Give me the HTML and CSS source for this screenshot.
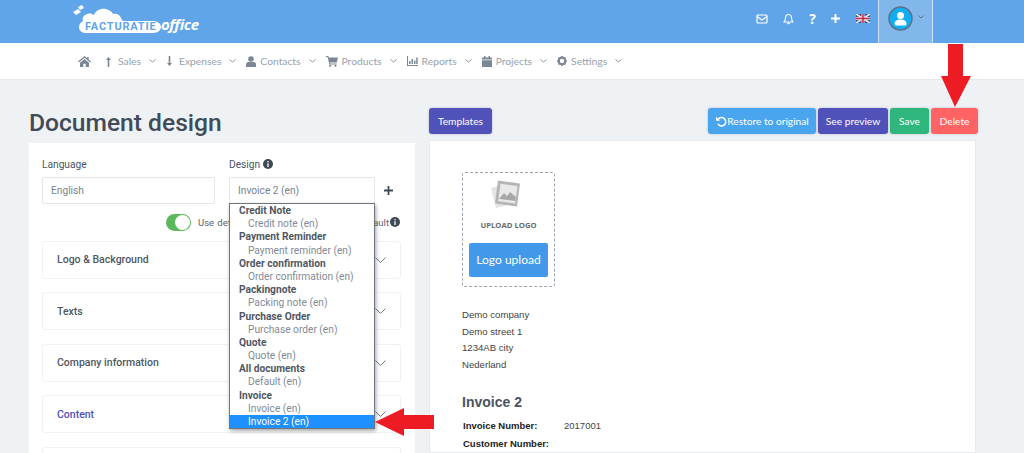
FILE: index.html
```html
<!DOCTYPE html>
<html>
<head>
    <meta http-equiv="Content-Type" content="text/html; charset=utf-8" />
    <title>Document design</title>
    <link rel="stylesheet" href="styles.css">
</head>
<body>

<!--top bar-->
<div class="topbar">
    <svg class="logo" width="132" height="34" viewBox="0 0 132 34">
        <path fill="#fff" d="M2 8l5-3 3 3-5 3zM7 3l4-2 2 3-4 2z"/>
        <path fill="#fff" d="M16 29c-5 0-8-2-8-6 0-3 2-5 4-6-1-4 1-6 4-7 3-1 5 0 7 1 2-5 7-7 12-6 4 1 6 3 7 5 4-1 7 1 8 4 1 2 1 3 3 3h29c5 0 8 3 8 6s-3 6-8 6z"/>
        <text class="logo-name" x="14" y="26" textLength="71">FACTURATIE</text>
        <text class="logo-office" x="90" y="26" textLength="38">office</text>
    </svg>
    <div class="topbar-right">
        <div class="top-icons">
            <svg class="top-icon" width="12" height="10" viewBox="0 0 12 10"><rect x="1" y="1" width="10" height="8" rx="1" fill="none" stroke="#fff" stroke-width="1.2"/><path d="M1 2.5l5 3.5 5-3.5" fill="none" stroke="#fff" stroke-width="1.2"/></svg>
            <svg class="top-icon" width="11" height="12" viewBox="0 0 11 12"><path d="M5.5 1.5c-2 0-3 1.500-3 3.500 0 2.500-1 3-1.500 4h9c-.5-1-1.500-1.500-1.500-4 0-2-1-3.500-3-3.500z" fill="none" stroke="#fff" stroke-width="1.100"/><path d="M4.300 10.500h2.400" stroke="#fff" stroke-width="1.300"/></svg>
            <span class="top-help">?</span>
            <svg class="top-icon" width="11" height="11" viewBox="0 0 11 11"><path d="M5.500 1v9M1 5.500h9" stroke="#fff" stroke-width="2"/></svg>
            <svg class="top-flag" width="14" height="9" viewBox="0 0 14 9"><rect width="14" height="9" fill="#3a4a8c"/><path d="M0 0l14 9M14 0L0 9" stroke="#e8e8f0" stroke-width="1.800"/><path d="M7 0v9M0 4.500h14" stroke="#e8e8f0" stroke-width="3"/><path d="M7 0v9M0 4.500h14" stroke="#c8283c" stroke-width="1.500"/></svg>
        </div>
        <div class="user-tile">
            <svg width="25" height="25" viewBox="0 0 25 25"><circle cx="12.500" cy="12.500" r="11.500" fill="#10aef0" stroke="#5f6f85" stroke-width="1.500"/><circle cx="12.500" cy="9.500" r="3.500" fill="#fff"/><path d="M6.500 18c0-3 2-4.500 6-4.500s6 1.500 6 4.500c0 1-1 1.500-2 1.500h-8c-1 0-2-.5-2-1.500z" fill="#fff"/></svg>
            <svg class="user-caret" width="6" height="4" viewBox="0 0 6 4"><path d="M.5.500L3 3 5.500.5" fill="none" stroke="#5f6f85" stroke-width="1"/></svg>
        </div>
    </div>
</div>

<!--menu-->
<div class="menu">
    <svg class="menu-home" width="13" height="11" viewBox="0 0 13 11"><path fill="#7b8794" d="M6.500 0L0 5.500l.8.900L6.500 1.700l5.700 4.700.8-.9-2.300-1.900V1h-1.500v1.300zM2 6.800V11h3.300V7.800h2.400V11H11V6.800L6.500 3z"/></svg>

    <div class="menu-item"><svg class="menu-icon" width="7" height="11" viewBox="0 0 7 11"><path fill="#7b8794" d="M3.500 1L6 4H4.300v7H2.700V4H1z"/></svg><span>Sales</span><svg class="chev" width="7" height="4" viewBox="0 0 7 4"><path d="M.5.500l3 2.500 3-2.500" fill="none" stroke="#8a95a3"/></svg></div>
    <div class="menu-item"><svg class="menu-icon" width="7" height="11" viewBox="0 0 7 11"><path fill="#7b8794" d="M3.500 10L6 7H4.300V0H2.700v7H1z"/></svg><span>Expenses</span><svg class="chev" width="7" height="4" viewBox="0 0 7 4"><path d="M.5.500l3 2.500 3-2.500" fill="none" stroke="#8a95a3"/></svg></div>
    <div class="menu-item"><svg class="menu-icon menu-icon-solid" width="10" height="11" viewBox="0 0 10 11"><circle cx="5" cy="3" r="2.800" fill="#7b8794"/><path fill="#7b8794" d="M0 11V8.500C0 7 1 6 2.500 6h5C9 6 10 7 10 8.500V11z"/></svg><span>Contacts</span><svg class="chev" width="7" height="4" viewBox="0 0 7 4"><path d="M.5.500l3 2.500 3-2.500" fill="none" stroke="#8a95a3"/></svg></div>
    <div class="menu-item"><svg class="menu-icon menu-icon-solid" width="12" height="11" viewBox="0 0 12 11"><path fill="#7b8794" d="M0 0h2.300l.4 1.500H12l-1.200 5H4l.2 1h6.400v1H3.400L1.600 1H0z"/><circle cx="4.200" cy="9.800" r="1.100" fill="#7b8794"/><circle cx="9.500" cy="9.800" r="1.100" fill="#7b8794"/></svg><span>Products</span><svg class="chev" width="7" height="4" viewBox="0 0 7 4"><path d="M.5.500l3 2.500 3-2.500" fill="none" stroke="#8a95a3"/></svg></div>
    <div class="menu-item"><svg class="menu-icon menu-icon-solid" width="11" height="10" viewBox="0 0 11 10"><path fill="#7b8794" d="M0 0h1v9h10v1H0zM2 5h1.500v3H2zM4.500 3H6v5H4.500zM7 4.500h1.500V8H7zM9.200 1.500h1.500V8H9.200z"/></svg><span>Reports</span><svg class="chev" width="7" height="4" viewBox="0 0 7 4"><path d="M.5.500l3 2.500 3-2.500" fill="none" stroke="#8a95a3"/></svg></div>
    <div class="menu-item"><svg class="menu-icon menu-icon-solid" width="10" height="11" viewBox="0 0 10 11"><path fill="#7b8794" d="M2 0h1.500v1.500h3V0H8v1.500h2V3.500H0V1.500h2zM0 4.300h10V11H0z"/></svg><span>Projects</span><svg class="chev" width="7" height="4" viewBox="0 0 7 4"><path d="M.5.500l3 2.500 3-2.500" fill="none" stroke="#8a95a3"/></svg></div>
    <div class="menu-item"><svg class="menu-icon menu-icon-solid" width="10" height="10" viewBox="0 0 10 10"><circle cx="5" cy="5" r="3.300" fill="none" stroke="#7b8794" stroke-width="2.200"/><path d="M5 0v10M0 5h10M1.500 1.500l7 7M8.500 1.500l-7 7" stroke="#7b8794" stroke-width="1.500" stroke-dasharray="1.600 6.800"/></svg><span>Settings</span><svg class="chev" width="7" height="4" viewBox="0 0 7 4"><path d="M.5.500l3 2.500 3-2.500" fill="none" stroke="#8a95a3"/></svg></div>
</div>

<div class="page">
    <div class="col-left">
        <h1>Document design</h1>
        <div class="card">
            <div class="fields">
                <div class="field field-lang">
                    <label>Language</label>
                    <div class="input">English</div>
                </div>
                <div class="field field-design">
                    <label>Design <svg class="info" width="10" height="10" viewBox="0 0 10 10"><circle cx="5" cy="5" r="5" fill="#3f4a56"/><path d="M5 2v1.300M5 4.300V8" stroke="#fff" stroke-width="1.300"/></svg></label>
                    <div class="input">Invoice 2 (en)</div>
                    <!--geopende select-->
                    <ul class="dropdown">
                        <li class="group">Credit Note</li>
                        <li>Credit note (en)</li>
                        <li class="group">Payment Reminder</li>
                        <li>Payment reminder (en)</li>
                        <li class="group">Order confirmation</li>
                        <li>Order confirmation (en)</li>
                        <li class="group">Packingnote</li>
                        <li>Packing note (en)</li>
                        <li class="group">Purchase Order</li>
                        <li>Purchase order (en)</li>
                        <li class="group">Quote</li>
                        <li>Quote (en)</li>
                        <li class="group">All documents</li>
                        <li>Default (en)</li>
                        <li class="group">Invoice</li>
                        <li>Invoice (en)</li>
                        <li class="selected">Invoice 2 (en)</li>
                    </ul>
                </div>
                <svg class="add" width="9" height="9" viewBox="0 0 9 9"><path d="M4.500 0v9M0 4.500h9" stroke="#3f4a56" stroke-width="1.800"/></svg>
            </div>
            <div class="default-row">
                <span class="toggle"><i></i></span>
                <span class="default-text">Use default template for this type as default</span>
                <svg class="info" width="10" height="10" viewBox="0 0 10 10"><circle cx="5" cy="5" r="5" fill="#3f4a56"/><path d="M5 2v1.300M5 4.300V8" stroke="#fff" stroke-width="1.300"/></svg>
            </div>
            <div class="acc">Logo &amp; Background<svg width="11" height="6" viewBox="0 0 11 6"><path d="M.5.500l5 5 5-5" fill="none" stroke="#6d7785"/></svg></div>
            <div class="acc">Texts<svg width="11" height="6" viewBox="0 0 11 6"><path d="M.5.500l5 5 5-5" fill="none" stroke="#6d7785"/></svg></div>
            <div class="acc">Company information<svg width="11" height="6" viewBox="0 0 11 6"><path d="M.5.500l5 5 5-5" fill="none" stroke="#6d7785"/></svg></div>
            <div class="acc acc-active">Content<svg width="11" height="6" viewBox="0 0 11 6"><path d="M.5.500l5 5 5-5" fill="none" stroke="#6d7785"/></svg></div>
            <div class="acc"></div>
        </div>
    </div>

    <div class="col-right">
        <div class="toolbar">
            <button class="btn btn-purple btn-templates">Templates</button>
            <div class="toolbar-right">
                <button class="btn btn-blue btn-restore"><svg width="12" height="11" viewBox="0 0 12 11"><path d="M3 3.500A4.200 4.200 0 1 1 3 8" fill="none" stroke="#fff" stroke-width="1.500"/><path d="M1 .8v4h4z" fill="#fff"/></svg>Restore to original</button>
                <button class="btn btn-purple btn-preview">See preview</button>
                <button class="btn btn-green btn-save">Save</button>
                <button class="btn btn-red btn-delete">Delete</button>
            </div>
        </div>
        <div class="sheet">
            <div class="upload">
                <svg class="upload-icon" width="36" height="34" viewBox="0 0 36 34"><path d="M3 9l12-3 5 20-12 3z" fill="#e4e4e4"/><path d="M10 1.500l22 3-3 23-22-3z" fill="#b5b5b5"/><path d="M12.500 4.800l17 2.300-2.300 17.400-17-2.300z" fill="#e9e9e9"/><path d="M11 20l5-6 3 3 3-4 6 5-.5 4-16-2z" fill="#a8a8a8"/></svg>
                <div class="upload-label">UPLOAD LOGO</div>
                <div class="upload-btn">Logo upload</div>
            </div>
            <div class="address">
                <div>Demo company</div>
                <div>Demo street 1</div>
                <div>1234AB city</div>
                <div>Nederland</div>
            </div>
            <h2>Invoice 2</h2>
            <div class="meta"><b>Invoice Number:</b><span>2017001</span></div>
            <div class="meta"><b>Customer Number:</b></div>
        </div>
    </div>
</div>

<!--rode pijlen-->
<svg class="arrow-down" width="32" height="64" viewBox="0 0 32 64"><path fill="#ed1c24" d="M8 0h15v32h8L15 63 1 32h7z"/></svg>
<svg class="arrow-left" width="60" height="28" viewBox="0 0 60 28"><path fill="#ed1c24" d="M0 14L29 0v7h30v14H29v7z"/></svg>

</body>
</html>
```

FILE: styles.css
```css
body {
    margin:0;
    height:453px;
    overflow:hidden;
    position:relative;
    background-color:#eff2f5;
    font-family:Roboto, "Noto Sans", sans-serif;
    color:#4a5462;
}
ul {
    list-style-type:none;
    margin:0;
    padding:0;
}

/* top bar */
.topbar {
    height:43px;
    background:#60a5ea;
    display:flex;
    align-items:flex-start;
    justify-content:space-between;
    padding:0 91px 0 71px;
}
.logo {
    margin-top:4px;
}
.logo-name {
    font:bold 11px Roboto, sans-serif;
    fill:#60a5ea;
    letter-spacing:.3px;
}
.logo-office {
    font:italic bold 15px "Open Sans", sans-serif;
    fill:#fff;
}
.topbar-right {
    display:flex;
    height:43px;
}
.top-icons {
    display:flex;
    align-items:center;
    height:37px;
}
.top-icon {
    margin-right:15px;
}
.top-help {
    color:#fff;
    font:bold 14px "Open Sans", sans-serif;
    margin-right:14px;
}
.top-flag {
    margin-right:8px;
}
.user-tile {
    width:55px;
    height:43px;
    background:#82b7ec;
    border-left:1px solid #cfe2f7;
    border-right:1px solid #cfe2f7;
    display:flex;
    align-items:center;
    padding:0 0 6px 9px;
    box-sizing:border-box;
}
.user-caret {
    margin:0 0 3px 5px;
}

/* menu */
.menu {
    height:37px;
    background:#fff;
    border-bottom:1px solid #e6e9ed;
    box-sizing:border-box;
    display:flex;
    align-items:center;
    padding:0 0 0 78px;
    font-family:Lato, sans-serif;
    font-size:10.3px;
    color:#98a1ad;
}
.menu-home {
    margin-right:14px;
}
.menu-item {
    display:flex;
    align-items:center;
    margin-right:10px;
}
.menu-icon {
    margin-right:6px;
}
.menu-icon-solid {
    margin-right:4px;
}
.chev {
    margin-left:8px;
}

/* page */
.page {
    display:flex;
    padding-left:29px;
}
.col-left {
    width:386px;
}
h1 {
    margin:25px 0 0;
    height:38px;
    font-size:24.600px;
    line-height:36px;
    font-weight:500;
    color:#414b57;
}
.card {
    background:#fff;
    height:310px;
    overflow:hidden;
    padding:14px 14px 0 13px;
    box-sizing:border-box;
}
.fields {
    display:flex;
    align-items:flex-end;
}
.field {
    position:relative;
}
.field-lang {
    width:173px;
    margin-right:14px;
}
.field-design {
    width:146px;
}
label {
    display:block;
    height:20px;
    font-size:10.200px;
    line-height:16px;
    color:#4a5462;
}
.info {
    vertical-align:-1px;
}
.input {
    height:27px;
    line-height:25px;
    border:1px solid #e3e6ea;
    border-radius:2px;
    box-sizing:border-box;
    padding-left:8px;
    font-size:10.200px;
    color:#78818d;
}
.add {
    margin:0 0 9px 9px;
}
.dropdown {
    position:absolute;
    top:46px;
    left:0;
    width:146px;
    box-sizing:border-box;
    background:#fff;
    border:1px solid #6f7680;
    box-shadow:1px 2px 4px rgba(0,0,0,0.35);
    z-index:2;
    font-size:10.200px;
    line-height:13.2px;
    color:#828a95;
}
.dropdown li {
    height:13.2px;
    padding-left:18px;
    white-space:nowrap;
}
.dropdown li.group {
    padding-left:9px;
    font-weight:bold;
    color:#4f5864;
}
.dropdown li.selected {
    background:#1e90ff;
    color:#fff;
}
.default-row {
    display:flex;
    align-items:center;
    height:36.500px;
    margin-right:1px;
    justify-content:flex-end;
    font-size:9.5px;
    color:#5b6470;
}
.toggle {
    width:25px;
    height:17px;
    border-radius:9px;
    background:#5cb85c;
    margin-right:7px;
    display:flex;
    justify-content:flex-end;
    align-items:center;
    padding-right:1px;
    box-sizing:border-box;
}
.toggle i {
    width:15px;
    height:15px;
    border-radius:50%;
    background:#fff;
}
.default-text {
    width:191px;
    white-space:nowrap;
    text-align:justify;
    text-align-last:justify;
    margin-right:1px;
}
.acc {
    height:38px;
    margin:0 0 13.500px;
    padding:0 14px;
    border:1px solid #f0f1f3;
    border-radius:3px;
    box-sizing:border-box;
    display:flex;
    align-items:center;
    justify-content:space-between;
    font-size:10.5px;
    font-weight:500;
    color:#4f5864;
}
.acc-active {
    color:#5152b9;
}

.col-right {
    width:549px;
    margin-left:14px;
}
.toolbar {
    display:flex;
    justify-content:space-between;
    margin-top:28px;
    height:26px;
}
.toolbar-right {
    display:flex;
    gap:2px;
}
.btn {
    height:26px;
    border:0;
    border-radius:3px;
    padding:0;
    font-family:Lato, sans-serif;
    font-size:10.200px;
    color:#fff;
    display:flex;
    align-items:center;
    justify-content:center;
    box-shadow:0 0 3px rgba(80,80,120,0.3);
}
.btn-templates {
    width:63px;
}
.btn-restore {
    width:108px;
}
.btn-preview {
    width:70px;
}
.btn-save {
    width:39px;
}
.btn-delete {
    width:47px;
}
.btn-purple {
    background:#5152b9;
}
.btn-blue {
    background:#4aa5ef;
}
.btn-green {
    background:#2eb67d;
}
.btn-red {
    background:#ff6363;
}
.sheet {
    width:547px;
    height:313px;
    overflow:hidden;
    margin-top:6px;
    background:#fff;
    border:1px solid #e6e9ed;
    box-sizing:border-box;
    padding:31px 0 0 32px;
    font-family:"Liberation Sans", Arial, sans-serif;
}
.upload {
    width:93px;
    height:115px;
    border:1px dashed #9aa5b1;
    border-radius:3px;
    box-sizing:border-box;
    display:flex;
    flex-direction:column;
    align-items:center;
    padding-top:6px;
}
.upload-icon {
    margin-right:5px;
}
.upload-label {
    margin-top:7px;
    font:bold 7.700px "Open Sans", sans-serif;
    color:#6b6b6b;
}
.upload-btn {
    width:79px;
    height:34px;
    margin-top:13px;
    line-height:34px;
    text-align:center;
    background:#4299e9;
    border-radius:2px;
    color:#fff;
    font-family:Lato, sans-serif;
    font-size:12px;
}
.address {
    margin-top:20px;
    font-size:9.6px;
    line-height:16.500px;
    color:#444;
}
h2 {
    margin:20px 0 8px;
    font-size:14px;
    line-height:18px;
    color:#4a5462;
}
.meta {
    display:flex;
    margin-bottom:5px;
    height:13px;
    padding-left:1px;
    font-size:9.5px;
    line-height:13px;
    color:#444;
}
.meta b {
    width:101px;
    color:#222;
    white-space:nowrap;
}

/* arrows over the screenshot */
.arrow-down {
    position:absolute;
    left:940px;
    top:44px;
}
.arrow-left {
    position:absolute;
    left:375px;
    top:408px;
    z-index:3;
}
```
